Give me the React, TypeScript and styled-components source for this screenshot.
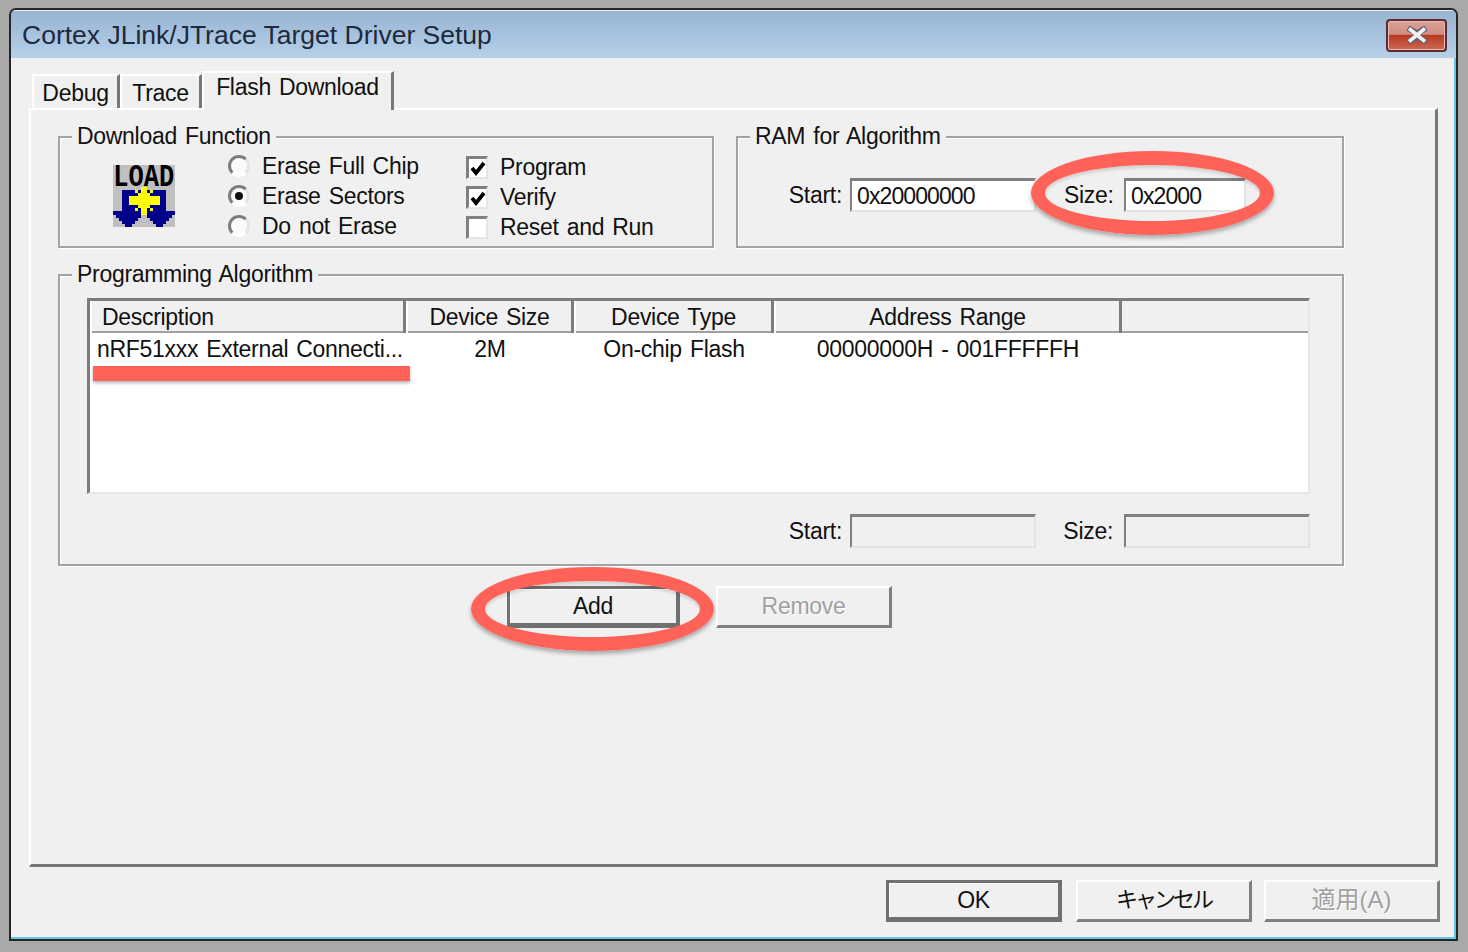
import React from 'react'
import styled, { createGlobalStyle, css } from 'styled-components'

const GlobalStyle = createGlobalStyle`
	html, body {
		margin: 0;
		padding: 0;
		background: #a9a9a9;
	}
	body {
		font-family: 'Liberation Sans', 'Noto Sans CJK JP', sans-serif;
		color: #111;
	}
`

const uiText = css`
	font-size: 23px;
	letter-spacing: -0.3px;
	word-spacing: 2px;
`

const Page = styled.div`
	width: 1468px;
	height: 952px;
	padding: 8px 0 0 9px;
	box-sizing: border-box;
	overflow: hidden;
`

const Window = styled.div`
	width: 1449px;
	height: 933px;
	box-sizing: border-box;
	border: 2px solid #262626;
	border-radius: 7px 7px 0 0;
	display: flex;
	flex-direction: column;
	overflow: hidden;
`

const TitleBar = styled.div`
	height: 48px;
	flex: none;
	display: flex;
	align-items: center;
	justify-content: space-between;
	padding: 1px 8px 0 11px;
	box-sizing: border-box;
	background: linear-gradient(#98b4d2, #b6d0e9);
	border-top: 1px solid #e4eef7;
`

const Title = styled.span`
	font-size: 26.5px;
	color: #1c2a3c;
`

const CloseButton = styled.div`
	width: 61px;
	height: 33px;
	box-sizing: border-box;
	margin: 0 1px 0 0;
	border: 2px solid #5d2a33;
	border-radius: 4px;
	display: flex;
	align-items: center;
	justify-content: center;
	background: linear-gradient(#dca297 0%, #d08c80 46%, #b83a22 50%, #cb6a57 100%);
	box-shadow: inset 0 0 0 1px #e9bcb4;
`

const Client = styled.div`
	flex: 1;
	min-height: 0;
	background: #f0f0f0;
	padding: 13px 14px 0 18px;
	border-right: 2px solid #62c6e6;
	border-bottom: 2px solid #62c6e6;
	display: flex;
	flex-direction: column;
`

const TabStrip = styled.div`
	height: 37px;
	flex: none;
	display: flex;
	align-items: flex-end;
	padding-left: 3px;
	position: relative;
	z-index: 1;
`

const Tab = styled.div<{ $width: number; $active?: boolean }>`
	${uiText}
	width: ${({ $width }) => $width}px;
	box-sizing: border-box;
	display: flex;
	justify-content: center;
	align-items: center;
	border-top: 2px solid #fff;
	border-left: 2px solid #fff;
	border-right: 3px solid #777;
	${({ $active }) =>
		$active
			? css`
					height: 39px;
					margin-bottom: -2px;
					padding-bottom: 8px;
					background: #f0f0f0;
				`
			: css`
					height: 34px;
					padding-top: 2px;
				`}
`

const TabPanel = styled.div`
	width: 1409px;
	height: 759px;
	flex: none;
	box-sizing: border-box;
	border-top: 2px solid #fff;
	border-left: 2px solid #fff;
	border-right: 3px solid #777;
	border-bottom: 3px solid #777;
	padding: 26px 0 0 27px;
`

const TopRow = styled.div`
	display: flex;
	gap: 22px;
	margin-bottom: 26px;
`

const Group = styled.div<{ $width: number; $height: number }>`
	position: relative;
	width: ${({ $width }) => $width}px;
	height: ${({ $height }) => $height}px;
	box-sizing: border-box;
	border: 2px solid #a3a3a3;
	box-shadow: 1px 1px 0 #fff, inset 1px 1px 0 #fff;
`

const Legend = styled.span`
	${uiText}
	position: absolute;
	top: -16px;
	left: 12px;
	padding: 0 5px;
	line-height: 28px;
	background: #f0f0f0;
`

const DownloadBody = styled.div`
	display: flex;
	height: 100%;
	padding: 13px 0 0 53px;
	box-sizing: border-box;
`

const LoadIcon = styled.svg`
	width: 62px;
	height: 67px;
	margin-top: 9px;
	margin-right: 53px;
	flex: none;
`

const OptionColumn = styled.div<{ $width: number; $offset?: number }>`
	width: ${({ $width }) => $width}px;
	margin-top: ${({ $offset }) => $offset ?? 0}px;
	display: flex;
	flex-direction: column;
`

const Option = styled.div`
	${uiText}
	height: 30px;
	display: flex;
	align-items: center;
	white-space: nowrap;
`

const Radio = styled.span<{ $checked?: boolean }>`
	width: 22px;
	height: 22px;
	margin-right: 12px;
	border-radius: 50%;
	box-sizing: border-box;
	flex: none;
	display: flex;
	align-items: center;
	justify-content: center;
	background: #fbfbfb;
	border: 3px solid;
	border-color: #7c7c7c #e4e4e4 #ffffff #7c7c7c;
	&::after {
		content: '';
		width: 8px;
		height: 8px;
		border-radius: 50%;
		background: ${({ $checked }) => ($checked ? '#111' : 'transparent')};
	}
`

const CheckBox = styled.span`
	width: 22px;
	height: 23px;
	margin-right: 12px;
	box-sizing: border-box;
	flex: none;
	display: flex;
	align-items: center;
	justify-content: center;
	background: #fff;
	border: 2px solid;
	border-top-width: 3px;
	border-left-width: 3px;
	border-color: #808080 #e6e6e6 #e6e6e6 #808080;
`

const FieldRow = styled.div`
	display: flex;
	align-items: center;
	padding: 40px 0 0 49px;
`

const FieldLabel = styled.span<{ $width: number; $gap: number }>`
	${uiText}
	width: ${({ $width }) => $width}px;
	margin-right: ${({ $gap }) => $gap}px;
	text-align: right;
	white-space: nowrap;
`

const SunkenInput = styled.div<{ $width: number; $disabled?: boolean }>`
	width: ${({ $width }) => $width}px;
	height: 34px;
	box-sizing: border-box;
	padding-left: 5px;
	font-size: 23px;
	line-height: 30px;
	letter-spacing: -0.9px;
	background: ${({ $disabled }) => ($disabled ? '#f0f0f0' : '#fff')};
	border: 2px solid;
	border-top-width: 3px;
	border-color: #808080 #e3e3e3 #e3e3e3 #808080;
`

const SizeField = styled.div`
	position: relative;
	display: flex;
	align-items: center;
	margin-left: 28px;
`

const Ring = styled.div<{ $left: number; $top: number }>`
	position: absolute;
	left: ${({ $left }) => $left}px;
	top: ${({ $top }) => $top}px;
	width: 243px;
	height: 84px;
	box-sizing: border-box;
	border: 14px solid #ff6259;
	border-radius: 50%;
	box-shadow: 0 3px 4px rgba(0, 0, 0, 0.3), inset 0 3px 3px rgba(0, 0, 0, 0.12);
	pointer-events: none;
`

const AlgorithmBody = styled.div`
	padding: 22px 32px 0 27px;
`

const DeviceList = styled.div`
	height: 196px;
	box-sizing: border-box;
	background: #fff;
	border: 3px solid #7c7c7c;
	border-right: 2px solid #e6e6e6;
	border-bottom: 2px solid #e6e6e6;
`

const columns = '316px 168px 200px 348px 1fr'

const ListHeader = styled.div`
	display: grid;
	grid-template-columns: ${columns};
	height: 30px;
	background: #f0f0f0;
	border-bottom: 2px solid #a0a0a0;
	box-sizing: content-box;
`

const HeaderCell = styled.div<{ $left?: boolean }>`
	${uiText}
	line-height: 32px;
	box-sizing: border-box;
	border-right: 3px solid #7c7c7c;
	border-left: 2px solid #fff;
	text-align: ${({ $left }) => ($left ? 'left' : 'center')};
	padding-left: ${({ $left }) => ($left ? '10px' : '0')};
`

const ListRow = styled.div`
	display: grid;
	grid-template-columns: ${columns};
	position: relative;
	height: 32px;
`

const RowCell = styled.div<{ $left?: boolean }>`
	${uiText}
	line-height: 32px;
	white-space: nowrap;
	text-align: ${({ $left }) => ($left ? 'left' : 'center')};
	padding-left: ${({ $left }) => ($left ? '7px' : '0')};
`

const Underline = styled.div`
	position: absolute;
	left: 3px;
	top: 33px;
	width: 317px;
	height: 15px;
	background: #ff6259;
	box-shadow: 0 2px 3px rgba(0, 0, 0, 0.3);
`

const RangeRow = styled.div`
	display: flex;
	justify-content: flex-end;
	align-items: center;
	margin-top: 20px;
`

const ActionRow = styled.div`
	display: flex;
	gap: 36px;
	margin-top: 20px;
	padding-left: 449px;
`

const AddWrap = styled.div`
	position: relative;
`

const PushButton = styled.div<{ $width: number; $default?: boolean; $disabled?: boolean }>`
	${uiText}
	width: ${({ $width }) => $width}px;
	height: 42px;
	box-sizing: border-box;
	display: flex;
	align-items: center;
	justify-content: center;
	background: #f0f0f0;
	color: ${({ $disabled }) => ($disabled ? '#a0a0a0' : '#111')};
	text-shadow: ${({ $disabled }) => ($disabled ? '1px 1px 0 #fff' : 'none')};
	border: 2px solid;
	${({ $default }) =>
		$default
			? css`
					border-color: #707070;
					border-width: 3px 4px 5px 3px;
					box-shadow: inset 1px 1px 0 #fff;
				`
			: css`
					border-color: #fff #808080 #808080 #fff;
					border-width: 2px 3px 3px 2px;
				`}
`

const Footer = styled.div`
	display: flex;
	justify-content: flex-end;
	gap: 12px;
	margin-top: 13px;
	> :first-child {
		margin-right: 2px;
	}
`

const CjkLabel = styled.span<{ $size: number; $spacing: number }>`
	font-size: ${({ $size }) => $size}px;
	letter-spacing: ${({ $spacing }) => $spacing}px;
	margin-bottom: 7px;
`

const Check = () => (
	<svg width='16' height='16' viewBox='0 0 16 16'>
		<path d='M2 8l4 5 8-10' fill='none' stroke='#000' strokeWidth='3.8' />
	</svg>
)

const CloseGlyph = () => (
	<svg width='28' height='20' viewBox='0 0 28 20'>
		<path
			d='M5 3l9 5.5L23 3M5 17l9-5.5L23 17'
			fill='none'
			stroke='#5f5f78'
			strokeWidth='6'
		/>
		<path
			d='M6 3.5l8 6.5 8-6.5M6 16.5l8-6.5 8 6.5'
			fill='none'
			stroke='#f2f2f2'
			strokeWidth='3.6'
		/>
	</svg>
)

const LoadGlyph = () => (
	<LoadIcon viewBox='0 -1.6 20 21.6' shapeRendering='crispEdges'>
		<rect width='20' height='20' fill='#c0c0c0' />
		<text
			x='0.1'
			y='5.58'
			transform='scale(1 1.2)'
			fontFamily="'Liberation Mono', monospace"
			fontWeight='700'
			fontSize='8.2'
			fill='#000'
		>
			LOAD
		</text>
		<path
			fill='#00008b'
			d='M3 8h6v7H3zM11 8h6v7h-6zM0 15h9v1H0zM11 15h9v1h-9zM1 16h8v1H1zM11 16h8v1h-8zM2 17h6v1H2zM12 17h6v1h-6zM3 18h4v1H3zM13 18h4v1h-4zM4 19h2v1H4zM14 19h2v1h-2z'
		/>
		<path
			fill='#ff0'
			d='M9 7h2v9H9zM8 9h4v5H8zM5 10h10v3H5zM7 8h1v1H7zM12 8h1v1h-1zM7 14h1v1H7zM12 14h1v1h-1z'
		/>
	</LoadIcon>
)

const App = () => {
	return (
		<Page>
			<GlobalStyle />
			<Window>
				<TitleBar>
					<Title>Cortex JLink/JTrace Target Driver Setup</Title>
					<CloseButton>
						<CloseGlyph />
					</CloseButton>
				</TitleBar>
				<Client>
					<TabStrip>
						<Tab $width={88}>Debug</Tab>
						<Tab $width={82}>Trace</Tab>
						<Tab $width={192} $active>
							Flash Download
						</Tab>
					</TabStrip>
					<TabPanel>
						<TopRow>
							<Group $width={656} $height={112}>
								<Legend>Download Function</Legend>
								<DownloadBody>
									<LoadGlyph />
									<OptionColumn $width={238}>
										<Option>
											<Radio />
											Erase Full Chip
										</Option>
										<Option>
											<Radio $checked />
											Erase Sectors
										</Option>
										<Option>
											<Radio />
											Do not Erase
										</Option>
									</OptionColumn>
									<OptionColumn $width={200} $offset={1}>
										<Option>
											<CheckBox>
												<Check />
											</CheckBox>
											Program
										</Option>
										<Option>
											<CheckBox>
												<Check />
											</CheckBox>
											Verify
										</Option>
										<Option>
											<CheckBox />
											Reset and Run
										</Option>
									</OptionColumn>
								</DownloadBody>
							</Group>
							<Group $width={608} $height={112}>
								<Legend>RAM for Algorithm</Legend>
								<FieldRow>
									<FieldLabel $width={55} $gap={8}>
										Start:
									</FieldLabel>
									<SunkenInput $width={186}>0x20000000</SunkenInput>
									<SizeField>
										<FieldLabel $width={49} $gap={11}>
											Size:
										</FieldLabel>
										<SunkenInput $width={122}>0x2000</SunkenInput>
										<Ring $left={-33} $top={-27} />
									</SizeField>
								</FieldRow>
							</Group>
						</TopRow>
						<Group $width={1286} $height={292}>
							<Legend>Programming Algorithm</Legend>
							<AlgorithmBody>
								<DeviceList>
									<ListHeader>
										<HeaderCell $left>Description</HeaderCell>
										<HeaderCell>Device Size</HeaderCell>
										<HeaderCell>Device Type</HeaderCell>
										<HeaderCell>Address Range</HeaderCell>
										<div />
									</ListHeader>
									<ListRow>
										<RowCell $left>nRF51xxx External Connecti...</RowCell>
										<RowCell>2M</RowCell>
										<RowCell>On-chip Flash</RowCell>
										<RowCell>00000000H - 001FFFFFH</RowCell>
										<Underline />
									</ListRow>
								</DeviceList>
								<RangeRow>
									<FieldLabel $width={55} $gap={8}>
										Start:
									</FieldLabel>
									<SunkenInput $width={186} $disabled />
									<FieldLabel $width={77} $gap={11}>
										Size:
									</FieldLabel>
									<SunkenInput $width={186} $disabled />
								</RangeRow>
							</AlgorithmBody>
						</Group>
						<ActionRow>
							<AddWrap>
								<PushButton $width={173} $default>
									Add
								</PushButton>
								<Ring $left={-36} $top={-19} />
							</AddWrap>
							<PushButton $width={176} $disabled>
								Remove
							</PushButton>
						</ActionRow>
					</TabPanel>
					<Footer>
						<PushButton $width={176} $default>
							OK
						</PushButton>
						<PushButton $width={176}>
							<CjkLabel $size={22} $spacing={-3}>
								キャンセル
							</CjkLabel>
						</PushButton>
						<PushButton $width={176} $disabled>
							<CjkLabel $size={24} $spacing={0}>
								適用(A)
							</CjkLabel>
						</PushButton>
					</Footer>
				</Client>
			</Window>
		</Page>
	)
}

export default App
